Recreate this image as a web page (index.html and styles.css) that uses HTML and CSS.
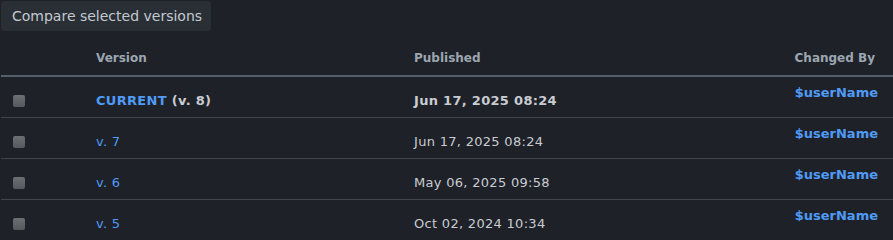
FILE: index.html
```html
<!DOCTYPE html>
<html>
<head>
<meta charset="utf-8">
<link rel="stylesheet" href="styles.css">
</head>
<body>
<div class="page">
  <button class="compare-btn">Compare selected versions</button>
  <div class="versions">
    <div class="row head">
      <div class="cell check"></div>
      <div class="cell ver">Version</div>
      <div class="cell pub">Published</div>
      <div class="cell by">Changed By</div>
    </div>
    <div class="row">
      <div class="cell check"><input type="checkbox" class="cb"></div>
      <div class="cell ver strong"><a class="link">CURRENT</a> (v. 8)</div>
      <div class="cell pub strong">Jun 17, 2025 08:24</div>
      <div class="cell by"><a class="user">$userName</a></div>
    </div>
    <div class="row">
      <div class="cell check"><input type="checkbox" class="cb"></div>
      <div class="cell ver"><a class="link">v. 7</a></div>
      <div class="cell pub">Jun 17, 2025 08:24</div>
      <div class="cell by"><a class="user">$userName</a></div>
    </div>
    <div class="row">
      <div class="cell check"><input type="checkbox" class="cb"></div>
      <div class="cell ver"><a class="link">v. 6</a></div>
      <div class="cell pub">May 06, 2025 09:58</div>
      <div class="cell by"><a class="user">$userName</a></div>
    </div>
    <div class="row">
      <div class="cell check"><input type="checkbox" class="cb"></div>
      <div class="cell ver"><a class="link">v. 5</a></div>
      <div class="cell pub">Oct 02, 2024 10:34</div>
      <div class="cell by"><a class="user">$userName</a></div>
    </div>
  </div>
</div>
</body>
</html>
```
FILE: styles.css
```css
html, body {
  margin: 0;
  background: #1e2127;
  font-family: "DejaVu Sans", Verdana, sans-serif;
  overflow: hidden;
}
.page {
  padding: 1px 0 0 1px;
}
.compare-btn {
  display: block;
  width: 210px;
  height: 30px;
  margin: 0 0 2px 0;
  padding: 0 0 0 11px;
  border: none;
  border-radius: 3px;
  background: #2a2f36;
  color: #c3c9cf;
  font-family: "DejaVu Sans", Verdana, sans-serif;
  font-size: 14px;
  text-align: left;
  line-height: 30px;
}
.versions {
  width: 892px;
}
.row {
  display: grid;
  grid-template-columns: 95px 318px 1fr 200px;
  height: 40px;
  border-bottom: 1px solid #3f4650;
  color: #c8ccd2;
  font-size: 13px;
  letter-spacing: 0.3px;
}
.row.head {
  height: 42px;
  border-bottom: 2px solid #56606b;
  color: #9ca6b1;
  font-size: 12px;
  font-weight: bold;
  letter-spacing: 0;
}
.cell {
  padding-top: 16px;
  line-height: 16px;
  white-space: nowrap;
}
.row.head .cell {
  padding-top: 17px;
}
.cell.check {
  padding: 18px 0 0 12px;
}
.cell.by {
  text-align: right;
  padding-right: 15px;
  padding-top: 8px;
}
.row.head .cell.by {
  padding-top: 17px;
  padding-right: 18px;
}
.strong {
  font-weight: bold;
}
.link {
  color: #4f9bf7;
}
.user {
  color: #4f9bf7;
  font-weight: bold;
  letter-spacing: 0;
}
.cb {
  appearance: none;
  -webkit-appearance: none;
  display: block;
  margin: 0;
  width: 12px;
  height: 12px;
  border-radius: 2px;
  background: linear-gradient(#6c6f73, #55585c);
}
```
